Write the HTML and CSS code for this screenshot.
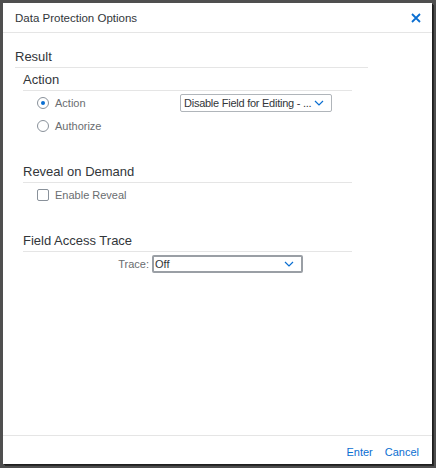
FILE: index.html
```html
<!DOCTYPE html>
<html>
<head>
<meta charset="utf-8">
<link rel="stylesheet" href="styles.css">
</head>
<body>
<div class="dialog">
  <div class="header">
    <span class="title">Data Protection Options</span>
    <svg class="close" width="10" height="10" viewBox="0 0 10 10"><path d="M1 1L9 9M9 1L1 9" stroke="#0a6ed1" stroke-width="1.8" fill="none"/></svg>
  </div>
  <div class="content">
    <div class="result">
      <div class="h1">Result</div>
      <div class="section">
        <div class="h2">Action</div>
        <div class="rows">
          <div class="row">
            <div class="opt"><span class="radio checked"></span><span class="label">Action</span></div>
            <div class="select wide"><span class="val tight">Disable Field for Editing - ...</span><svg class="chev" width="10" height="6" viewBox="0 0 10 6"><path d="M1 1L5 5L9 1" stroke="#0a6ed1" stroke-width="1.2" fill="none"/></svg></div>
          </div>
          <div class="row">
            <div class="opt"><span class="radio"></span><span class="label">Authorize</span></div>
          </div>
        </div>
      </div>
      <div class="section">
        <div class="h2">Reveal on Demand</div>
        <div class="rows">
          <div class="row">
            <div class="opt"><span class="check"></span><span class="label">Enable Reveal</span></div>
          </div>
        </div>
      </div>
      <div class="section">
        <div class="h2">Field Access Trace</div>
        <div class="trace">
          <span class="trace-label">Trace:</span>
          <div class="select trace-select"><span class="val">Off</span><svg class="chev" width="10" height="6" viewBox="0 0 10 6"><path d="M1 1L5 5L9 1" stroke="#0a6ed1" stroke-width="1.2" fill="none"/></svg></div>
        </div>
      </div>
    </div>
  </div>
  <div class="footer">
    <span class="btn">Enter</span>
    <span class="btn">Cancel</span>
  </div>
</div>
</body>
</html>
```
FILE: styles.css
```css
html, body {
  margin: 0;
  padding: 0;
}
body {
  width: 436px;
  height: 468px;
  background: #4f4f4f;
  font-family: "Liberation Sans", Arial, sans-serif;
  color: #32363a;
  overflow: hidden;
}
.dialog {
  margin: 3px 0 0 3px;
  width: 429px;
  height: 461px;
  background: #fff;
  display: flex;
  flex-direction: column;
  box-shadow: 1px 1px 0 #1e1e1e, 2px 2px 0 #2a2a2a;
}
.header {
  height: 30px;
  border-bottom: 1px solid #e5e5e5;
  display: flex;
  align-items: center;
  justify-content: space-between;
  padding: 1px 11px 0 12px;
  box-sizing: border-box;
  flex: none;
}
.title {
  font-size: 11.5px;
  color: #32363a;
}
.close {
  display: block;
}
.content {
  flex: 1;
  padding: 16px 0 0 12px;
}
.result {
  width: 353px;
}
.h1 {
  font-size: 13px;
  line-height: 15px;
  padding-bottom: 3px;
  border-bottom: 1px solid #e5e5e5;
}
.section {
  margin-left: 8px;
  width: 329px;
}
.h2 {
  font-size: 13px;
  line-height: 15px;
  padding: 4px 0 3px 0;
  border-bottom: 1px solid #e5e5e5;
}
.rows {
  padding: 0 0 0 14px;
}
.row {
  display: flex;
  align-items: center;
  height: 23px;
}
.opt {
  display: flex;
  align-items: center;
  width: 143px;
}
.label {
  font-size: 11px;
  color: #6a6d70;
  margin-left: 6px;
}
.radio {
  width: 12px;
  height: 12px;
  border: 1px solid #89919a;
  border-radius: 50%;
  box-sizing: border-box;
  display: inline-flex;
  align-items: center;
  justify-content: center;
}
.radio.checked::after {
  content: "";
  width: 4px;
  height: 4px;
  border-radius: 50%;
  background: #0a6ed1;
}
.check {
  width: 12px;
  height: 12px;
  border: 1px solid #89919a;
  border-radius: 2px;
  box-sizing: border-box;
}
.select {
  height: 18px;
  box-sizing: border-box;
  border: 1px solid #b0b5ba;
  border-radius: 2px;
  display: flex;
  align-items: center;
  justify-content: space-between;
  padding: 0 7px 0 3px;
  font-size: 11px;
  color: #32363a;
  flex: none;
}
.val {
  white-space: nowrap;
}
.tight {
  letter-spacing: -0.25px;
}
.wide {
  width: 152px;
}
.trace {
  display: flex;
  align-items: center;
  margin-top: 3px;
}
.trace-label {
  font-size: 11px;
  color: #6a6d70;
  width: 126px;
  text-align: right;
  margin-right: 3px;
}
.trace-select {
  width: 151px;
  border: 2px solid #9a9fa5;
  padding-left: 1px;
}
.section + .section {
  margin-top: 23px;
}
.footer {
  flex: none;
  height: 29px;
  box-sizing: border-box;
  padding-top: 3px;
  border-top: 1px solid #e5e5e5;
  display: flex;
  justify-content: flex-end;
  align-items: center;
  gap: 12px;
  padding-right: 13px;
}
.btn {
  font-size: 11px;
  color: #0a6ed1;
}
```
